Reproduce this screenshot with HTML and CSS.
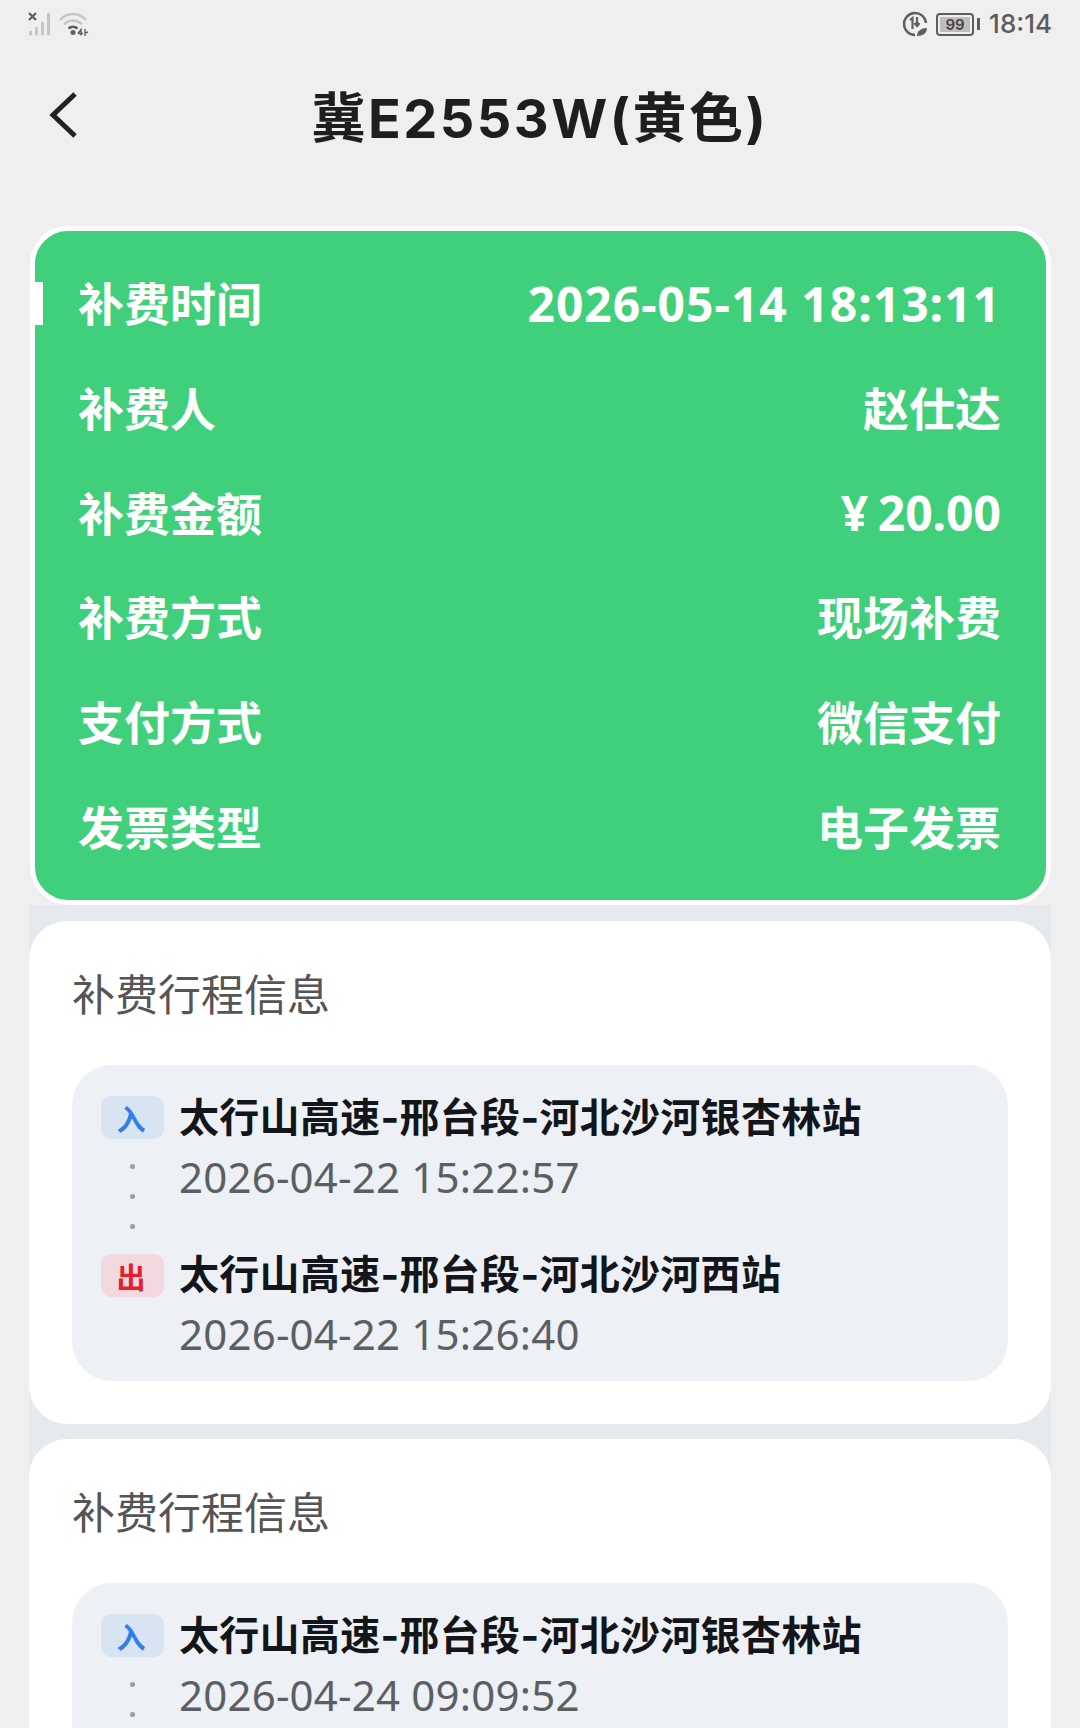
FILE: index.html
```html
<!DOCTYPE html>
<html lang="zh-CN">
<head>
<meta charset="utf-8">
<title>冀E2553W(黄色)</title>
<link rel="stylesheet" href="styles.css">
</head>
<body>
<div class="screen">
  <div class="status">
    <div class="status-group">
      <svg class="ic-signal" width="26" height="26" viewBox="0 0 26 26">
        <g stroke="#c6c6c6" stroke-width="3" stroke-linecap="round">
          <path d="M2.500 21v2M8.500 17v6M14.500 12v11M20.500 3v20"/>
        </g>
        <path d="M1 2l7 7M8 2l-7 7" stroke="#5e5e5e" stroke-width="2.200" fill="none"/>
      </svg>
      <svg class="ic-wifi" width="30" height="26" viewBox="0 0 30 26">
        <path d="M1 9C8 1 20 1 27 9" stroke="#c6c6c6" stroke-width="2.500" fill="none"/>
        <path d="M5 13.500C10 8 18 8 23 13.500" stroke="#c6c6c6" stroke-width="2.500" fill="none"/>
        <path d="M9.500 17.500C12 15 16 15 18.500 17.500" stroke="#5e5e5e" stroke-width="2.500" fill="none"/>
        <circle cx="14" cy="21.500" r="2.500" fill="#5e5e5e"/>
        <path d="M19 22.500l3-4v6M19 22.500h5M26 18v7M26 22l3-1" stroke="#5e5e5e" stroke-width="1.400" fill="none"/>
      </svg>
    </div>
    <div class="status-group right">
      <svg class="ic-eco" width="26" height="26" viewBox="0 0 26 26">
        <path d="M13 24A11 11 0 1 1 24 12" stroke="#5e5e5e" stroke-width="2.400" fill="none"/>
        <path d="M8 9l2.500-2v11M15 6v9M12.500 12l2.500 3 2.500-3" stroke="#5e5e5e" stroke-width="2.200" fill="none"/>
        <path d="M15 25c0-5 4-8 10-8 0 5-4 8-10 8z" fill="#5e5e5e"/>
      </svg>
      <div class="battery"><span class="battery-fill">99</span></div>
      <span class="battery-tip"></span>
      <span class="clock">18:14</span>
    </div>
  </div>

  <header class="nav">
    <svg class="back" width="30" height="48" viewBox="0 0 30 48">
      <path d="M26 3L4 24l22 21" stroke="#222" stroke-width="5" fill="none"/>
    </svg>
    <h1 class="title">冀E2553W(黄色)</h1>
  </header>

  <section class="summary">
    <span class="tick"></span>
    <div class="row"><span>补费时间</span><span class="num spaced">2026-05-14 18:13:11</span></div>
    <div class="row"><span>补费人</span><span>赵仕达</span></div>
    <div class="row"><span>补费金额</span><span class="num tight">¥ 20.00</span></div>
    <div class="row"><span>补费方式</span><span>现场补费</span></div>
    <div class="row"><span>支付方式</span><span>微信支付</span></div>
    <div class="row"><span>发票类型</span><span>电子发票</span></div>
  </section>

  <div class="list">
    <section class="card">
      <h2 class="card-title">补费行程信息</h2>
      <div class="panel">
        <div class="stop">
          <div class="side"><span class="tag in">入</span><div class="dots"><i></i><i></i><i></i></div></div>
          <div class="info"><div class="station">太行山高速-邢台段-河北沙河银杏林站</div><div class="time">2026-04-22 15:22:57</div></div>
        </div>
        <div class="stop">
          <div class="side"><span class="tag out">出</span></div>
          <div class="info"><div class="station">太行山高速-邢台段-河北沙河西站</div><div class="time">2026-04-22 15:26:40</div></div>
        </div>
      </div>
    </section>
    <section class="card">
      <h2 class="card-title">补费行程信息</h2>
      <div class="panel">
        <div class="stop">
          <div class="side"><span class="tag in">入</span><div class="dots"><i></i><i></i><i></i></div></div>
          <div class="info"><div class="station">太行山高速-邢台段-河北沙河银杏林站</div><div class="time">2026-04-24 09:09:52</div></div>
        </div>
      </div>
    </section>
  </div>
</div>
</body>
</html>
```
FILE: styles.css
```css
* { box-sizing: border-box; }
html, body { margin: 0; padding: 0; }
body {
  background: #efefef;
  font-family: "Inter", "Noto Sans CJK SC", sans-serif;
}
.screen { height: 1728px; overflow: hidden; background: #efefef; }

.status {
  height: 50px;
  padding: 11px 28px 0 28px;
  display: flex;
  justify-content: space-between;
  align-items: flex-start;
}
.status-group { display: flex; align-items: center; gap: 5px; }
.status-group.right { gap: 0; }
.ic-eco { margin-right: 8px; }
.battery {
  width: 38px;
  height: 23px;
  border: 2px solid #5e5e5e;
  border-radius: 4px;
  padding: 2px;
  display: flex;
}
.battery-fill {
  flex: 1;
  background: #bdbdbd;
  color: #444;
  font-size: 15px;
  font-weight: 600;
  line-height: 15px;
  text-align: center;
}
.battery-tip { width: 3px; height: 12px; background: #5e5e5e; margin: 0 9px 0 3px; }
.clock { font-size: 26px; font-weight: 500; color: #5c5c5c; line-height: 26px; }

.nav {
  height: 176px;
  position: relative;
  display: flex;
  justify-content: center;
  padding-top: 34px;
}
.back { position: absolute; left: 49px; top: 41px; }
.title {
  margin: 0;
  font-size: 54px;
  line-height: 70px;
  font-weight: 700;
  letter-spacing: 2.500px;
  color: #1e1e1e;
}

.summary {
  position: relative;
  margin: 0 29px 0 30px;
  height: 679px;
  padding: 18px 45px 0 43px;
  background: #40d07b;
  border: 5px solid #fff;
  border-radius: 38px;
}
.tick { position: absolute; left: 0; top: 51px; width: 8px; height: 43px; background: #fff; }
.row {
  height: 104.700px;
  display: flex;
  justify-content: space-between;
  align-items: center;
  font-size: 46px;
  font-weight: 700;
  color: #fff;
}
.num { font-family: "Noto Sans", sans-serif; font-size: 48px; line-height: 60px; padding-top: 5px; }
.num.spaced { letter-spacing: 1px; }
.num.tight { word-spacing: -3px; }

.list {
  margin: 0 29px;
  padding-top: 16px;
  background: #e6e9ee;
  display: flex;
  flex-direction: column;
  gap: 15px;
}
.card {
  height: 503px;
  padding: 44px 43px 0 43px;
  background: #fff;
  border-radius: 38px;
}
.card-title {
  margin: 0;
  height: 100px;
  font-size: 43px;
  line-height: 60px;
  font-weight: 400;
  color: #555;
}
.panel {
  height: 316px;
  padding: 31px 29px 0 29px;
  background: #edf0f4;
  border-radius: 40px;
}
.stop { display: flex; height: 157px; gap: 15px; }
.stop + .stop .side { margin-top: 1px; }
.side { width: 63px; display: flex; flex-direction: column; align-items: center; }
.tag {
  width: 63px;
  height: 43px;
  padding: 3px 3px 0 0;
  border-radius: 10px;
  font-size: 29px;
  line-height: 43px;
  font-weight: 700;
  text-align: center;
}
.tag.in { background: #d8e4f2; color: #2f7fe8; }
.tag.out { background: #f2d9df; color: #e4202f; }
.dots { display: flex; flex-direction: column; gap: 25px; padding-top: 25px; }
.dots i { width: 5px; height: 5px; border-radius: 50%; background: #9b9fa5; }
.info { min-width: 0; }
.station {
  font-size: 40px;
  line-height: 44px;
  font-weight: 700;
  letter-spacing: 0.300px;
  color: #12161a;
  white-space: nowrap;
}
.time {
  margin-top: 15px;
  font-family: "Noto Sans", sans-serif;
  font-size: 42px;
  line-height: 44px;
  letter-spacing: 0.200px;
  color: #5b5f63;
  white-space: nowrap;
}
```
